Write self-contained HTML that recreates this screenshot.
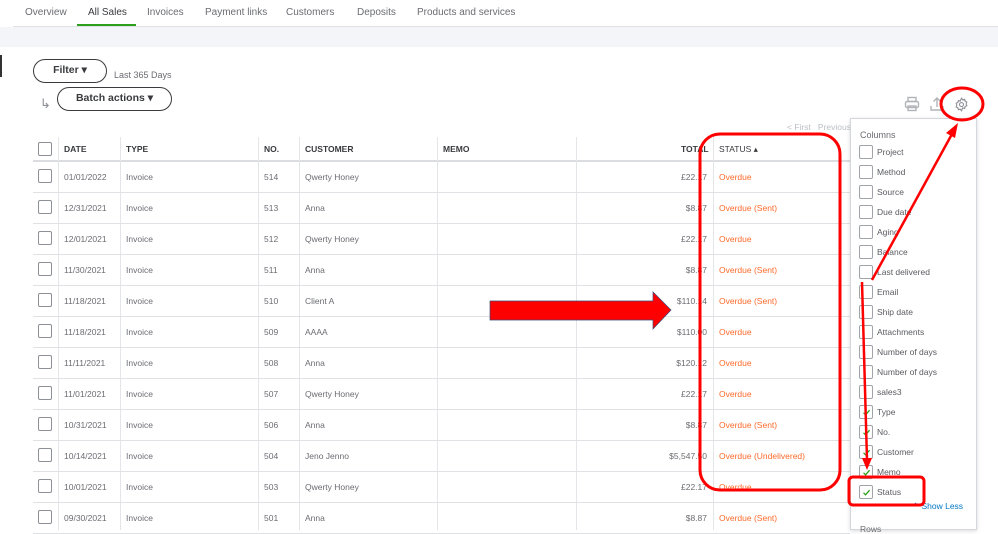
<!DOCTYPE html><html><head><style>
*{margin:0;padding:0;box-sizing:border-box}
body{width:998px;height:530px;overflow:hidden;background:#fff;font-family:"Liberation Sans",sans-serif;position:relative;color:#393a3d}
.a{position:absolute;white-space:nowrap}
.tab{font-size:10px;color:#6b6c72;top:7px}
.cb{position:absolute;width:14px;height:14px;border:1px solid #8d9096;border-radius:2px;background:#fff}
.hd{font-size:8.5px;font-weight:bold;color:#393a3d;top:144px}
.c{font-size:8.5px;color:#6b6c72}
.st{font-size:8.5px;color:#ff6a2b}
.vl{position:absolute;top:137px;width:1px;height:393px;background:#e4e5e8}
.hl{position:absolute;left:33px;width:817px;height:1px;background:#e0e1e4}
.pi{font-size:8.5px;color:#5a5b60}
</style></head><body>
<div class="a tab" style="left:25px">Overview</div>
<div class="a tab" style="left:88px;color:#393a3d">All Sales</div>
<div class="a" style="left:77px;top:24px;width:59px;height:3px;background:#2ca01c"></div>
<div class="a tab" style="left:147px">Invoices</div>
<div class="a tab" style="left:205px">Payment links</div>
<div class="a tab" style="left:286px">Customers</div>
<div class="a tab" style="left:357px">Deposits</div>
<div class="a tab" style="left:417px">Products and services</div>
<div class="a" style="left:13px;top:26px;width:985px;height:1px;background:#e0e1e4"></div>
<div class="a" style="left:0;top:27px;width:998px;height:20px;background:#f4f5f8"></div>
<div class="a" style="left:0;top:55px;width:2px;height:22px;background:#333"></div>
<div class="a" style="left:33px;top:59px;width:74px;height:24px;border:1.5px solid #393a3d;border-radius:12px;font-size:10.5px;font-weight:bold;text-align:center;line-height:21px">Filter ▾</div>
<div class="a" style="left:114px;top:70px;font-size:9px;color:#6b6c72">Last 365 Days</div>
<div class="a" style="left:40px;top:96px;font-size:13px;color:#8d9096">↳</div>
<div class="a" style="left:57px;top:87px;width:115px;height:24px;border:1.5px solid #393a3d;border-radius:12px;font-size:10.5px;font-weight:bold;text-align:center;line-height:21px">Batch actions ▾</div>
<div class="a" style="left:787px;top:122px;font-size:8.5px;color:#babec5">&lt; First &nbsp;&nbsp;Previous</div>
<svg class="a" style="left:904px;top:96px" width="16" height="16" viewBox="0 0 16 16" fill="none" stroke="#b0b3b8" stroke-width="1.4"><rect x="4" y="1.5" width="8" height="4"/><rect x="1.5" y="5.5" width="13" height="6" rx="1.5"/><rect x="4" y="10" width="8" height="4.5"/></svg>
<svg class="a" style="left:929px;top:96px" width="16" height="16" viewBox="0 0 16 16" fill="none" stroke="#b0b3b8" stroke-width="1.4"><path d="M8 11V2M4.5 5.5L8 2l3.5 3.5M2 10v4h12v-4"/></svg>
<svg class="a" style="left:954px;top:97px" width="15" height="15" viewBox="0 0 24 24" fill="none" stroke="#8d9096" stroke-width="1.8"><circle cx="12" cy="12" r="3.2"/><path d="M12 2l2 2.5 3-.8.8 3 2.7 1.4-1 2.9 1 2.9-2.7 1.4-.8 3-3-.8L12 22l-2-2.5-3 .8-.8-3-2.7-1.4 1-2.9-1-2.9 2.7-1.4.8-3 3 .8z"/></svg>
<!-- table -->
<div class="hl" style="top:160px;height:2px;background:#dcdde0"></div>
<div class="vl" style="left:58px"></div><div class="vl" style="left:120px"></div><div class="vl" style="left:258px"></div><div class="vl" style="left:299px"></div><div class="vl" style="left:437px"></div><div class="vl" style="left:576px"></div><div class="vl" style="left:713px"></div>
<div class="cb" style="left:38px;top:142px"></div>
<div class="a hd" style="left:64px">DATE</div><div class="a hd" style="left:126px">TYPE</div><div class="a hd" style="left:264px">NO.</div><div class="a hd" style="left:305px">CUSTOMER</div><div class="a hd" style="left:443px">MEMO</div><div class="a hd" style="left:681px">TOTAL</div><div class="a hd" style="left:719px;font-weight:normal">STATUS ▴</div>
<div id="rows"></div>
<script>
var d=[["01/01/2022","514","Qwerty Honey","£22.17","Overdue"],["12/31/2021","513","Anna","$8.87","Overdue (Sent)"],["12/01/2021","512","Qwerty Honey","£22.17","Overdue"],["11/30/2021","511","Anna","$8.87","Overdue (Sent)"],["11/18/2021","510","Client A","$110.14","Overdue (Sent)"],["11/18/2021","509","AAAA","$110.00","Overdue"],["11/11/2021","508","Anna","$120.12","Overdue"],["11/01/2021","507","Qwerty Honey","£22.17","Overdue"],["10/31/2021","506","Anna","$8.87","Overdue (Sent)"],["10/14/2021","504","Jeno Jenno","$5,547.50","Overdue (Undelivered)"],["10/01/2021","503","Qwerty Honey","£22.17","Overdue"],["09/30/2021","501","Anna","$8.87","Overdue (Sent)"]];
var h="";d.forEach(function(r,i){var y=161+31*i,t=y+11;
h+='<div class="cb" style="left:38px;top:'+(y+8)+'px"></div><div class="a c" style="left:64px;top:'+t+'px">'+r[0]+'</div><div class="a c" style="left:126px;top:'+t+'px">Invoice</div><div class="a c" style="left:264px;top:'+t+'px">'+r[1]+'</div><div class="a c" style="left:305px;top:'+t+'px">'+r[2]+'</div><div class="a c" style="right:291px;top:'+t+'px">'+r[3]+'</div><div class="a st" style="left:719px;top:'+t+'px">'+r[4]+'</div><div class="hl" style="top:'+(y+31)+'px"></div>';});
document.getElementById("rows").innerHTML=h;
</script>
<!-- panel -->
<div class="a" style="left:850px;top:118px;width:127px;height:412px;background:#fff;border:1px solid #d4d7dc;box-shadow:0 1px 4px rgba(0,0,0,.15)"></div>
<div class="a" style="left:860px;top:130px;font-size:9px;color:#6b6c72">Columns</div>
<div id="pl"></div>
<script>
var p=["Project","Method","Source","Due date","Aging","Balance","Last delivered","Email","Ship date","Attachments","Number of days","Number of days","sales3","Type","No.","Customer","Memo","Status"];
var s="";p.forEach(function(n,i){var y=145+20*i;
s+='<div class="cb" style="left:859px;top:'+y+'px;border-color:#a0a3a8">'+(i>12?'<svg style="position:absolute;left:2px;top:2px" width="9" height="9" viewBox="0 0 9 9"><path d="M1.5 4.8L3.6 6.8 7.6 2.2" fill="none" stroke="#2ca01c" stroke-width="1.3"/></svg>':'')+'</div><div class="a pi" style="left:877px;top:'+(y+2)+'px">'+n+'</div>';});
document.getElementById("pl").innerHTML=s;
</script>
<div class="a" style="left:912px;top:501px;font-size:8.5px;color:#0077c5">⌃ Show Less</div>
<div class="a" style="left:860px;top:524px;font-size:8.5px;color:#6b6c72">Rows</div>
<!-- annotations -->
<svg class="a" style="left:0;top:0" width="998" height="530">
<rect x="700" y="134" width="140" height="356" rx="20" fill="none" stroke="#f00" stroke-width="3"/>
<polygon points="490,301 653,301 653,292 671,310 653,329 653,320 490,320" fill="#f00" stroke="#3a4a7a" stroke-width="0.7"/>
<ellipse cx="962" cy="104" rx="21" ry="16" fill="none" stroke="#f00" stroke-width="3"/>
<rect x="849" y="477" width="75" height="28" rx="4" fill="none" stroke="#f00" stroke-width="3"/>
<line x1="872" y1="280" x2="952" y2="134" stroke="#f00" stroke-width="2.5"/>
<polygon points="958,123 946,133 955,138" fill="#f00"/>
<line x1="862" y1="282" x2="867" y2="460" stroke="#f00" stroke-width="2.5"/>
<polygon points="862,458 872,458 867,470" fill="#f00"/>
</svg>
</body></html>
